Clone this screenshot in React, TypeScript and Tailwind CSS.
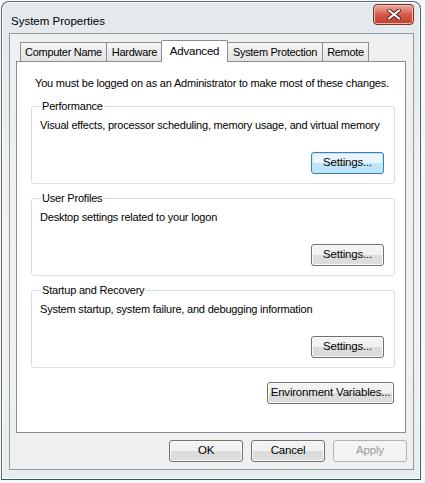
import React from "react";

const font = { fontFamily: '"Liberation Sans", Arial, sans-serif' };

function Btn({
  label,
  className = "",
  variant = "normal",
}: {
  label: string;
  className?: string;
  variant?: "normal" | "focus" | "disabled";
}) {
  const look =
    variant === "focus"
      ? "border-[#3c7fb1] bg-gradient-to-b from-[#eaf6fd] from-50% to-[#bde5fb] to-50% text-black shadow-[inset_0_0_0_1px_#c4e5f6]"
      : variant === "disabled"
      ? "border-[#adb2b5] bg-[#f4f4f4] text-[#9a9a9a]"
      : "border-[#707070] bg-gradient-to-b from-[#f2f2f2] from-50% to-[#dcdcdc] to-50% text-black shadow-[inset_0_0_0_1px_#fbfbfb]";
  return (
    <div
      className={`h-[22px] shrink-0 whitespace-nowrap flex items-center justify-center rounded-[3px] border text-[11.5px] tracking-[-0.2px] ${look} ${className}`}
    >
      {label}
    </div>
  );
}

function Group({
  title,
  text,
  focus = false,
}: {
  title: string;
  text: string;
  focus?: boolean;
}) {
  return (
    <fieldset className="w-[364px] min-w-0 ml-[14px] border border-[#d5dfe5] rounded-[3px] pl-[8px] pr-[10px] pb-[9px]">
      <legend className="ml-[1px] px-[1px] leading-[15px]">{title}</legend>
      <p className="pt-[4px] leading-[15px]">{text}</p>
      <div className="flex justify-end mt-[19px]">
        <Btn label="Settings..." className="w-[73px]" variant={focus ? "focus" : "normal"} />
      </div>
    </fieldset>
  );
}

const tabs = [
  { t: "Computer Name", w: "w-[86px]" },
  { t: "Hardware", w: "w-[56px]" },
  { t: "Advanced", w: "w-[67px]" },
  { t: "System Protection", w: "w-[95px]" },
  { t: "Remote", w: "w-[47px]" },
];

export default function App() {
  return (
    <div className="w-[425px] h-[483px] bg-[#f6f7f8] overflow-hidden" style={font}>
      <div className="ml-[1px] mt-[1px] w-[420px] h-[479px] rounded-t-[8px] border border-[#5f6a72] border-b-[#2e5a66] border-r-[#3c6470] bg-gradient-to-b from-[#e2e8ec] via-[#f1f4f6] to-[#e8edf0] shadow-[inset_0_0_0_1px_#fafcfd] px-[7px] flex flex-col">
        {/* title bar */}
        <div className="h-[31px] flex items-start justify-between">
          <span className="mt-[12px] ml-[2px] text-[11.5px] text-black leading-[15px]">System Properties</span>
          <div className="mt-[2px] mr-[-1px] w-[41px] h-[21px] rounded-[4px] border border-[#7a3128] bg-gradient-to-b from-[#eab0a6] via-[#d45a4c] to-[#c23c2f] shadow-[inset_0_0_0_1px_#efb9ae] flex items-center justify-center">
            <svg width="14" height="11" viewBox="0 0 14 11">
              <path d="M2 1.5 L12 9.5 M12 1.5 L2 9.5" stroke="#5b1f19" strokeWidth="4" strokeLinecap="round" />
              <path d="M2 1.5 L12 9.5 M12 1.5 L2 9.5" stroke="#ffffff" strokeWidth="2.2" strokeLinecap="round" />
            </svg>
          </div>
        </div>
        {/* client area */}
        <div className="w-[405px] h-[437px] border border-[#8d98a1] bg-[#f0f0f0] px-[6px] pt-[6px] text-[11px] tracking-[-0.2px] text-black whitespace-nowrap">
          <div className="flex pl-[4px] h-[21px] items-end">
            {tabs.map(({ t, w }) => {
              const sel = t === "Advanced";
              return (
                <div
                  key={t}
                  className={
                    sel
                      ? `relative z-10 ${w} h-[22px] -mx-[1px] mb-[-1px] pt-[3px] text-center text-[11.5px] leading-[15px] bg-white border border-b-0 border-[#898c95] rounded-t-[2px]`
                      : `${w} h-[19px] pt-[2px] text-center text-[11px] tracking-[-0.3px] bg-gradient-to-b from-[#f6f6f6] to-[#e3e3e3] border border-b-0 border-r-0 last:border-r border-[#898c95] leading-[15px]`
                  }
                >
                  {t}
                </div>
              );
            })}
          </div>
          <div className="w-[390px] h-[372px] bg-white border border-[#898c95] pt-[14px]">
            <p className="pl-[18px] leading-[15px]">
              You must be logged on as an Administrator to make most of these changes.
            </p>
            <div className="mt-[8px] flex flex-col gap-[7px]">
              <Group
                title="Performance"
                text="Visual effects, processor scheduling, memory usage, and virtual memory"
                focus
              />
              <Group title="User Profiles" text="Desktop settings related to your logon" />
              <Group
                title="Startup and Recovery"
                text="System startup, system failure, and debugging information"
              />
            </div>
            <div className="flex justify-end pr-[11px] mt-[14px]">
              <Btn label="Environment Variables..." className="w-[127px]" />
            </div>
          </div>
          <div className="flex justify-end gap-[8px] mt-[7px] pr-[0px]">
            <Btn label="OK" className="w-[74px]" />
            <Btn label="Cancel" className="w-[74px]" />
            <Btn label="Apply" className="w-[74px]" variant="disabled" />
          </div>
        </div>
      </div>
    </div>
  );
}
